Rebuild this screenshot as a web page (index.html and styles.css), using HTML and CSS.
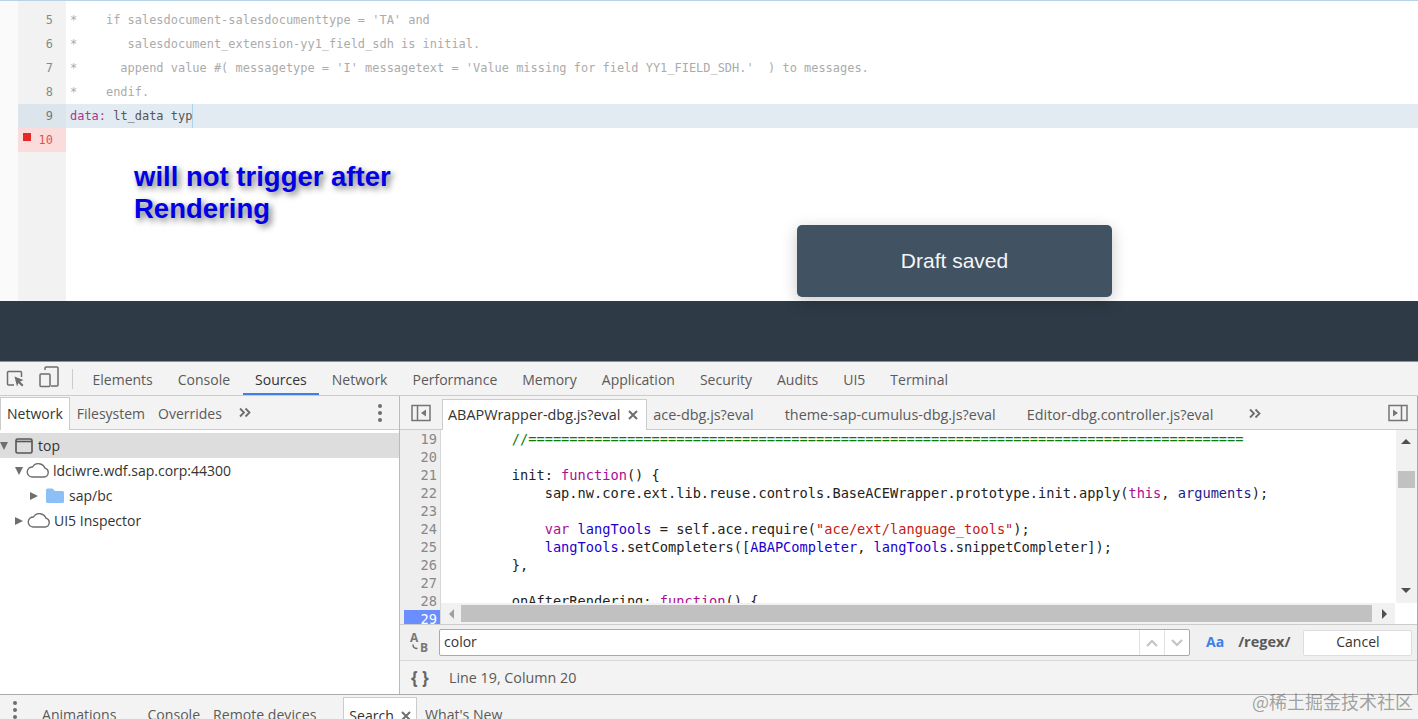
FILE: index.html
```html
<!DOCTYPE html>
<html lang="en">
<head>
<meta charset="utf-8">
<title>Draft saved</title>
<link rel="stylesheet" href="styles.css">
</head>
<body>
<div class="page">
  <section class="editor">
    <div class="strip"></div>
    <div class="gutter">
      <div class="gnum">5</div>
      <div class="gnum">6</div>
      <div class="gnum">7</div>
      <div class="gnum">8</div>
      <div class="gnum gactive">9</div>
      <div class="gnum gerror"><span class="errmark"></span>10</div>
    </div>
    <div class="acecode">
      <div class="aceline cmt">*    if salesdocument-salesdocumenttype = 'TA' and</div>
      <div class="aceline cmt">*       salesdocument_extension-yy1_field_sdh is initial.</div>
      <div class="aceline cmt">*      append value #( messagetype = 'I' messagetext = 'Value missing for field YY1_FIELD_SDH.'  ) to messages.</div>
      <div class="aceline cmt">*    endif.</div>
      <div class="aceline active"><span class="kw">data:</span> lt_data typ<span class="cursor"></span></div>
    </div>
    <div class="note">will not trigger after<br>Rendering</div>
    <div class="toast">Draft saved</div>
  </section>
  <div class="darkbar"></div>

  <section class="devtools">
    <nav class="maintabs">
      <svg class="ico-inspect" width="20" height="20" viewBox="0 0 20 20"><path d="M8 16H2.5a1 1 0 0 1-1-1V3.500a1 1 0 0 1 1-1h12a1 1 0 0 1 1 1V8" fill="none" stroke="#6e6e6e" stroke-width="1.500"/><path d="M8.500 7.500l9 3.500-3.500 1.500 3.500 3.500-1.500 1.500-3.500-3.500-1.500 3.500z" fill="#6e6e6e"/></svg>
      <svg class="ico-device" width="20" height="22" viewBox="0 0 20 22"><path d="M6 4V2a1 1 0 0 1 1-1h11a1 1 0 0 1 1 1v17a1 1 0 0 1-1 1h-6" fill="none" stroke="#6e6e6e" stroke-width="1.500"/><rect x="1" y="8" width="10" height="12.500" rx="1" fill="none" stroke="#6e6e6e" stroke-width="1.500"/></svg>
      <span class="tbsep"></span>
      <span class="mtab">Elements</span>
      <span class="mtab">Console</span>
      <span class="mtab mtab-on">Sources</span>
      <span class="mtab">Network</span>
      <span class="mtab">Performance</span>
      <span class="mtab">Memory</span>
      <span class="mtab">Application</span>
      <span class="mtab">Security</span>
      <span class="mtab">Audits</span>
      <span class="mtab">UI5</span>
      <span class="mtab">Terminal</span>
    </nav>
    <div class="panes">
      <aside class="navpane">
        <div class="subtabs">
          <span class="stab stab-on">Network</span>
          <span class="stab">Filesystem</span>
          <span class="stab">Overrides</span>
          <svg class="chev" width="12" height="12" viewBox="0 0 12 12"><path d="M1 1.500L5 5.500 1 9.500M6.500 1.500l4 4-4 4" fill="none" stroke="#6e6e6e" stroke-width="1.800"/></svg>
          <span class="dots"><i></i><i></i><i></i></span>
        </div>
        <ul class="tree">
          <li class="trow trow-sel">
            <span class="tri tri-down"></span>
            <svg class="ico-frame" width="18" height="16" viewBox="0 0 18 16"><rect x="1" y="1" width="16" height="14" rx="1.500" fill="none" stroke="#555" stroke-width="1.600"/><path d="M1 3.500h16" stroke="#555" stroke-width="1.600"/></svg>
            <span>top</span>
          </li>
          <li class="trow lvl1">
            <span class="tri tri-down"></span>
            <svg class="ico-cloud" width="24" height="15" viewBox="0 0 24 15"><path d="M6 14h12a4.500 4.500 0 0 0 1-8.800A7 7 0 0 0 6.500 4 5 5 0 0 0 6 14z" fill="none" stroke="#6e6e6e" stroke-width="1.400"/></svg>
            <span>ldciwre.wdf.sap.corp:44300</span>
          </li>
          <li class="trow lvl2">
            <span class="tri tri-right"></span>
            <svg class="ico-folder" width="18" height="15" viewBox="0 0 18 15"><path d="M0 2a1.500 1.500 0 0 1 1.500-1.500h5L9 3h7.500A1.500 1.500 0 0 1 18 4.500v9a1.500 1.500 0 0 1-1.500 1.500h-15A1.500 1.500 0 0 1 0 13.500z" fill="#8cbff5"/></svg>
            <span>sap/bc</span>
          </li>
          <li class="trow lvl1">
            <span class="tri tri-right"></span>
            <svg class="ico-cloud" width="24" height="15" viewBox="0 0 24 15"><path d="M6 14h12a4.500 4.500 0 0 0 1-8.800A7 7 0 0 0 6.500 4 5 5 0 0 0 6 14z" fill="none" stroke="#6e6e6e" stroke-width="1.400"/></svg>
            <span>UI5 Inspector</span>
          </li>
        </ul>
      </aside>
      <main class="srcpane">
        <div class="filetabs">
          <svg class="ico-dock" width="20" height="18" viewBox="0 0 20 18"><rect x="1" y="1.500" width="18" height="15" fill="none" stroke="#757575" stroke-width="1.500"/><path d="M6.500 1.500v15" stroke="#757575" stroke-width="1.500"/><path d="M15 5.500v7L10 9z" fill="#757575"/></svg>
          <span class="ftab ftab-on">ABAPWrapper-dbg.js?eval<svg class="closex" width="10" height="10" viewBox="0 0 10 10"><path d="M1 1l8 8M9 1L1 9" stroke="#6e6e6e" stroke-width="2"/></svg></span>
          <span class="ftab f2">ace-dbg.js?eval</span>
          <span class="ftab f3">theme-sap-cumulus-dbg.js?eval</span>
          <span class="ftab f4">Editor-dbg.controller.js?eval</span>
          <svg class="chev chev-f" width="12" height="12" viewBox="0 0 12 12"><path d="M1 1.500L5 5.500 1 9.500M6.500 1.500l4 4-4 4" fill="none" stroke="#6e6e6e" stroke-width="1.800"/></svg>
          <svg class="ico-dock2" width="20" height="18" viewBox="0 0 20 18"><rect x="1" y="1.500" width="18" height="15" fill="none" stroke="#757575" stroke-width="1.500"/><path d="M13.500 1.500v15" stroke="#757575" stroke-width="1.500"/><path d="M5 5.500v7L10 9z" fill="#757575"/></svg>
        </div>
        <div class="codebox">
          <div class="lnums">
            <div>19</div><div>20</div><div>21</div><div>22</div><div>23</div><div>24</div><div>25</div><div>26</div><div>27</div><div>28</div>
            <div class="lnum-cur">29</div>
          </div>
          <div class="codelines">
            <div class="cl">        <span class="c-com">//=======================================================================================</span></div>
            <div class="cl"> </div>
            <div class="cl">        init: <span class="c-kw">function</span>() {</div>
            <div class="cl">            sap.nw.core.ext.lib.reuse.controls.BaseACEWrapper.prototype.init.apply(<span class="c-kw">this</span>, <span class="c-var">arguments</span>);</div>
            <div class="cl"> </div>
            <div class="cl">            <span class="c-kw">var</span> <span class="c-def">langTools</span> = self.ace.require(<span class="c-str">"ace/ext/language_tools"</span>);</div>
            <div class="cl">            <span class="c-def">langTools</span>.setCompleters([<span class="c-def">ABAPCompleter</span>, <span class="c-def">langTools</span>.snippetCompleter]);</div>
            <div class="cl">        },</div>
            <div class="cl"> </div>
            <div class="cl">        onAfterRendering: <span class="c-kw">function</span>() {</div>
          </div>
          <div class="vscroll">
            <span class="arr arr-up"></span>
            <span class="vthumb"></span>
            <span class="arr arr-down"></span>
          </div>
          <div class="hscroll">
            <span class="arr arr-left"></span>
            <span class="hthumb"></span>
            <span class="arr arr-right"></span>
          </div>
        </div>
        <div class="findbar">
          <svg class="ico-ab" width="22" height="24" viewBox="0 0 22 24"><text x="1" y="11" class="abtext">A</text><text x="11" y="21" class="abtext">B</text><path d="M4 13.500c0 3 1 4 4.500 4" fill="none" stroke="#6e6e6e" stroke-width="1.500"/></svg>
          <div class="findinput">
            <span class="findval">color</span>
            <span class="findbtn"><svg width="12" height="8" viewBox="0 0 12 8"><path d="M1 7l5-5 5 5" fill="none" stroke="#c4c4c4" stroke-width="2.200"/></svg></span>
            <span class="findbtn"><svg width="12" height="8" viewBox="0 0 12 8"><path d="M1 1l5 5 5-5" fill="none" stroke="#c4c4c4" stroke-width="2.200"/></svg></span>
          </div>
          <span class="aa">Aa</span>
          <span class="regex">/regex/</span>
          <span class="cancel">Cancel</span>
        </div>
        <div class="statusbar">
          <span class="braces">{ }</span>
          <span>Line 19, Column 20</span>
        </div>
      </main>
    </div>
    <footer class="drawer">
      <span class="dots dots-d"><i></i><i></i><i></i></span>
      <span class="dtab d-anim">Animations</span>
      <span class="dtab d-cons">Console</span>
      <span class="dtab d-rem">Remote devices</span>
      <span class="dtab dtab-on">Search<svg class="closex" width="10" height="10" viewBox="0 0 10 10"><path d="M1 1l8 8M9 1L1 9" stroke="#6e6e6e" stroke-width="2"/></svg></span>
      <span class="dtab d-new">What's New</span>
    </footer>
  </section>
  <div class="watermark">@稀土掘金技术社区</div>
</div>
</body>
</html>
```
FILE: styles.css
```css
* { box-sizing: border-box; }
html, body { margin: 0; padding: 0; }
body { background: #fff; overflow: hidden; }
.page { position: relative; width: 1418px; height: 719px; overflow: hidden; display: flex; flex-direction: column; font-family: "Open Sans", "Liberation Sans", sans-serif; }

/* ---------- top editor ---------- */
.editor { position: relative; height: 301px; flex: none; display: flex; background: #fff; border-top: 1px solid #b5d3ea; }
.strip { width: 18px; background: #fafafa; }
.gutter { width: 48px; background: #f2f2f2; padding-top: 7px; }
.gnum { height: 24px; text-align: right; padding-right: 13px; font: 11.960px/24px "DejaVu Sans Mono", monospace; color: #8a8a8a; position: relative; }
.gactive { background: #dde5ec; color: #777; }
.gerror { background: #fbdcdc; color: #e25050; }
.errmark { position: absolute; left: 5px; top: 5px; width: 8px; height: 8px; background: #e62828; }
.acecode { flex: 1; padding-top: 7px; }
.aceline { height: 24px; padding-left: 4px; font: 11.960px/24px "DejaVu Sans Mono", monospace; white-space: pre; color: #555; }
.cmt { color: #ababab; }
.active { background: #e3ebf2; }
.kw { color: #a8378e; }
.cursor { display: inline-block; width: 1px; height: 24px; margin-right: -1px; background: #a9d3ea; vertical-align: top; }
.note { position: absolute; left: 134px; top: 160px; font: bold 27.500px/32px "Liberation Sans", sans-serif; color: #0000e6; text-shadow: 3px 3px 6px rgba(0, 0, 0, .55); }
.toast { position: absolute; left: 797px; top: 224px; width: 315px; height: 72px; border-radius: 5px; background: #415263; color: #f4f6f8; font: 21px/72px "Liberation Sans", sans-serif; text-align: center; box-shadow: 0 4px 16px rgba(0, 0, 0, .22); z-index: 2; }
.darkbar { height: 60px; flex: none; background: #2e3a45; }

/* ---------- devtools ---------- */
.devtools { flex: 1; min-height: 0; display: flex; flex-direction: column; background: #f3f3f3; color: #5a5a5a; font-size: 14px; border-top: 1px solid #8a9097; }
.maintabs { height: 34px; flex: none; display: flex; align-items: stretch; border-bottom: 1px solid #ccc; padding-left: 5px; position: relative; }
.ico-inspect { align-self: center; margin-left: 1px; }
.ico-device { align-self: center; margin-left: 13px; margin-top: -3px; }
.tbsep { width: 1px; height: 20px; background: #ccc; align-self: center; margin: 0 7px 0 13px; }
.mtab { padding: 2px 12.500px 0; line-height: 32px; white-space: nowrap; }
.mtab-on { color: #333; border-bottom: 2px solid #3f7fe8; height: 33px; }
.panes { flex: 1; min-height: 0; display: flex; }

.navpane { width: 400px; flex: none; background: #fff; border-right: 1px solid #bbb; display: flex; flex-direction: column; }
.subtabs { height: 34px; flex: none; background: #f3f3f3; border-bottom: 1px solid #ccc; display: flex; align-items: center; position: relative; }
.stab { padding: 2px 7px 0; line-height: 32px; white-space: nowrap; }
.stab:nth-child(3) { padding-right: 5px; margin-left: -1px; }
.stab-on { background: #fff; color: #333; border: 1px solid #ccc; border-bottom: none; height: 33px; margin: 1px 0 0 0; padding: 0 6px; }
.chev { margin: 0 0 0 12px; }
.dots { display: flex; flex-direction: column; gap: 3px; }
.dots i { width: 4px; height: 4px; border-radius: 50%; background: #6e6e6e; display: block; }
.subtabs .dots { margin-left: auto; margin-right: 17px; }
.tree { list-style: none; margin: 3px 0 0; padding: 0; }
.trow { height: 25px; display: flex; align-items: center; color: #333; white-space: nowrap; }
.trow-sel { background: #ddd; padding-left: 0; }
.tri { width: 0; height: 0; flex: none; border-style: solid; border-color: transparent; }
.tri-down { border-width: 8px 4.500px 0; border-top-color: #6e6e6e; margin-right: 6px; }
.tri-right { border-width: 4.500px 0 4.500px 8px; border-left-color: #6e6e6e; margin-right: 7px; }
.ico-frame { margin: 0 5px 0 1px; }
.lvl1 { padding-left: 15px; }
.lvl2 { padding-left: 30px; }
.ico-cloud { margin-right: 3px; margin-left: -3px; }
.ico-folder { margin-right: 6px; margin-left: 1px; }
.lvl2 span:last-child { margin-left: -1px; }

.srcpane { flex: 1; min-width: 0; display: flex; flex-direction: column; border-right: 1px solid #aaa; }
.filetabs { height: 34px; flex: none; border-bottom: 1px solid #ccc; display: flex; align-items: flex-end; position: relative; font-size: 14.400px; }
.ico-dock { align-self: center; margin: 0 11px 0 11px; flex: none; }
.ftab { line-height: 31px; height: 30px; padding: 0 6px; white-space: nowrap; color: #5a5a5a; }
.ftab-on { background: #fff; color: #333; border: 1px solid #ccc; border-bottom: none; height: 31px; line-height: 29px; margin-bottom: -1px; padding: 0 8px 0 5px; }
.ftab-on .closex { margin-left: 8px; }
.f3 { margin-left: 19px; }
.f4 { margin-left: 19px; }
.chev-f { align-self: center; margin: 2px 0 0 30px; }
.ico-dock2 { align-self: center; margin-left: auto; margin-right: 9px; }

.codebox { position: relative; height: 194px; flex: none; display: flex; background: #fff; overflow: hidden; }
.lnums { width: 41px; flex: none; background: #eee; border-right: 1px solid #d8d8d8; padding-left: 4px; text-align: right; font: 13.670px/18px "DejaVu Sans Mono", monospace; color: #888; }
.lnums div { height: 18px; padding: 0 3px 0 0; }
.lnums .lnum-cur { background: #6a8dff; color: #fff; height: 14px; overflow: hidden; }
.codelines { flex: 1; min-width: 0; padding: 0 0 0 5px; font: 13.670px/18px "DejaVu Sans Mono", monospace; color: #222; overflow: hidden; }
.cl { height: 18px; white-space: pre; }
.c-com { color: #0a7a0a; }
.c-kw { color: #aa0d91; }
.c-var { color: #1c1c8c; }
.c-def { color: #1c00cf; }
.c-str { color: #c41a16; }
.vscroll { width: 21px; height: 173px; flex: none; background: #f1f1f1; position: relative; }
.vthumb { position: absolute; left: 2px; right: 2px; top: 41px; height: 17px; background: #c1c1c1; }
.arr { position: absolute; width: 0; height: 0; border-style: solid; border-color: transparent; }
.arr-up { left: 5px; top: 9px; border-width: 0 5px 5px; border-bottom-color: #505050; }
.arr-down { left: 5px; bottom: 10px; border-width: 5px 5px 0; border-top-color: #505050; }
.hscroll { position: absolute; left: 41px; right: 22px; bottom: 0; height: 21px; background: #f1f1f1; }
.hthumb { position: absolute; left: 20px; right: 23px; top: 2px; height: 17px; background: #c1c1c1; }
.arr-left { left: 8px; top: 6px; border-width: 5px 5px 5px 0; border-right-color: #a0a0a0; }
.arr-right { right: 8px; top: 6px; border-width: 5px 0 5px 5px; border-left-color: #505050; }

.findbar { height: 37px; flex: none; display: flex; align-items: center; background: #f0f0f0; border-top: 1px solid #ccc; border-bottom: 1px solid #d8d8d8; padding-left: 9px; }
.ico-ab { flex: none; }
.abtext { font: bold 12px "Open Sans", "Liberation Sans", sans-serif; fill: #777; }
.findinput { height: 27px; width: 751px; margin-left: 8px; display: flex; align-items: center; background: #fff; border: 1px solid #aaa; border-radius: 2px; }
.findval { flex: 1; padding: 0 0 2px 4px; color: #333; }
.findbtn { width: 25px; height: 100%; border-left: 1px solid #e2e2e2; display: flex; align-items: center; justify-content: center; }
.aa { margin-left: 16px; padding-bottom: 2px; color: #3f7fe8; font-weight: 700; }
.regex { margin-left: 14px; padding-bottom: 2px; color: #5a5a5a; font-weight: 700; font-size: 14.500px; }
.cancel { width: 109px; height: 26px; margin-left: 13px; background: #fff; border: 1px solid #ddd; border-radius: 2px; text-align: center; line-height: 22px; color: #333; }
.statusbar { flex: 1; min-height: 0; display: flex; align-items: center; padding-left: 11px; font-size: 14.300px; }
.braces { font-weight: 700; width: 38px; color: #666; font-size: 17px; letter-spacing: 0; line-height: 18px; }

.drawer { height: 25px; flex: none; display: flex; align-items: flex-start; border-top: 1px solid #aaa; position: relative; font-size: 14.100px; }
.dots-d { margin: 6px 0 0 13px; }
.dtab { white-space: nowrap; line-height: 18px; padding-top: 11px; }
.d-anim { margin-left: 25px; }
.d-cons { margin-left: 31px; }
.d-rem { margin-left: 13px; }
.dtab-on { background: #fff; color: #333; border: 1px solid #ccc; border-bottom: none; margin: 2px 0 0 27px; height: 30px; padding: 9px 5px 0; }
.dtab-on .closex { margin-left: 7px; }
.d-new { margin-left: 8px; }
.watermark { position: absolute; left: 1252px; top: 689px; font: 18px/24px "Noto Sans CJK SC", sans-serif; color: rgba(90, 90, 90, .55); white-space: nowrap; }
```
